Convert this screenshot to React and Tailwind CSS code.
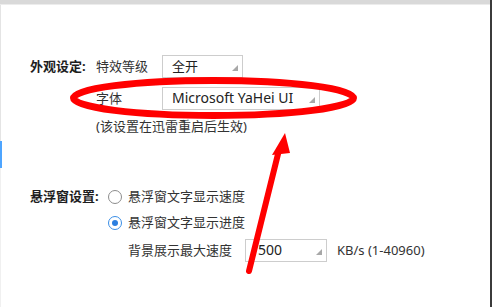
import React from "react";

const font = { fontFamily: '"Noto Sans", "Noto Sans CJK SC", sans-serif' };

function Tri() {
  return (
    <svg width="6" height="6" viewBox="0 0 6 6" className="shrink-0">
      <polygon points="6,0 6,6 0,6" fill="#a8a8a8" />
    </svg>
  );
}

function Select({ w, children, pl = "pl-[9px]", size = "text-[13px]" }) {
  return (
    <div
      className={`flex items-center justify-between h-[23px] border border-[#cdcdcd] bg-white ${pl} pr-[4px] pb-[1px]`}
      style={{ width: w }}
    >
      <span className={`${size} leading-none text-[#222]`}>{children}</span>
      <div className="self-end mb-[5px]">
        <Tri />
      </div>
    </div>
  );
}

function Radio({ checked }) {
  return checked ? (
    <div className="w-[14px] h-[14px] rounded-full border-[1.5px] border-[#3a8ee6] bg-white flex items-center justify-center shrink-0">
      <div className="w-[6px] h-[6px] rounded-full bg-[#2b7fe0]" />
    </div>
  ) : (
    <div className="w-[14px] h-[14px] rounded-full border border-[#8c8c8c] bg-white shrink-0" />
  );
}

export default function App() {
  return (
    <div
      className="relative w-[492px] h-[307px] bg-white overflow-hidden border-r-2 border-[#3b3b3b] text-[#333]"
      style={font}
    >
      <div className="h-[4px] bg-[#d9d9d9]" />
      <div className="h-[1px] bg-[#ececec]" />
      <div className="flex h-[302px]">
        <div className="w-[2px] flex flex-col">
          <div className="h-[136px] w-[1px] bg-[#e4e4e4]" />
          <div className="h-[27px] bg-[#4ea5ff]" />
          <div className="flex-1 w-[1px] bg-[#f0f0f0]" />
        </div>
        <div className="flex-1 pl-[28px] pt-[50px] text-[13px]">
          <div className="flex items-center h-[23px]">
            <span className="w-[66px] font-bold text-[#1e1e1e]">外观设定:</span>
            <span className="w-[66px]">特效等级</span>
            <Select w="81px">全开</Select>
          </div>
          <div className="flex items-center h-[23px] mt-[9px]">
            <span className="w-[66px]" />
            <span className="w-[66px]">字体</span>
            <Select w="158px" size="text-[14px]">Microsoft YaHei UI</Select>
          </div>
          <div className="flex items-center h-[18px] mt-[8px]">
            <span className="w-[66px]" />
            <span>(该设置在迅雷重启后生效)</span>
          </div>
          <div className="flex items-center h-[20px] mt-[51px]">
            <span className="w-[78px] font-bold text-[#1e1e1e]">悬浮窗设置:</span>
            <Radio />
            <span className="ml-[6px]">悬浮窗文字显示速度</span>
          </div>
          <div className="flex items-center h-[20px] mt-[6px]">
            <span className="w-[78px]" />
            <Radio checked />
            <span className="ml-[6px]">悬浮窗文字显示进度</span>
          </div>
          <div className="flex items-center h-[23px] mt-[6px]">
            <span className="w-[98px]" />
            <span className="w-[117px]">背景展示最大速度</span>
            <Select w="82px" pl="pl-[12px]" size="text-[14px]">500</Select>
            <span className="ml-[10px]">KB/s (1-40960)</span>
          </div>
        </div>
      </div>
      <svg
        className="absolute inset-0 pointer-events-none"
        width="492"
        height="307"
        viewBox="0 0 492 307"
      >
        <ellipse cx="213.5" cy="98" rx="140" ry="17.5" fill="none" stroke="#ff0000" strokeWidth="7" />
        <line x1="249" y1="271" x2="279" y2="150" stroke="#ff0000" strokeWidth="6" strokeLinecap="round" />
        <polygon points="285,133 272,155 290,153" fill="#ff0000" />
      </svg>
    </div>
  );
}
